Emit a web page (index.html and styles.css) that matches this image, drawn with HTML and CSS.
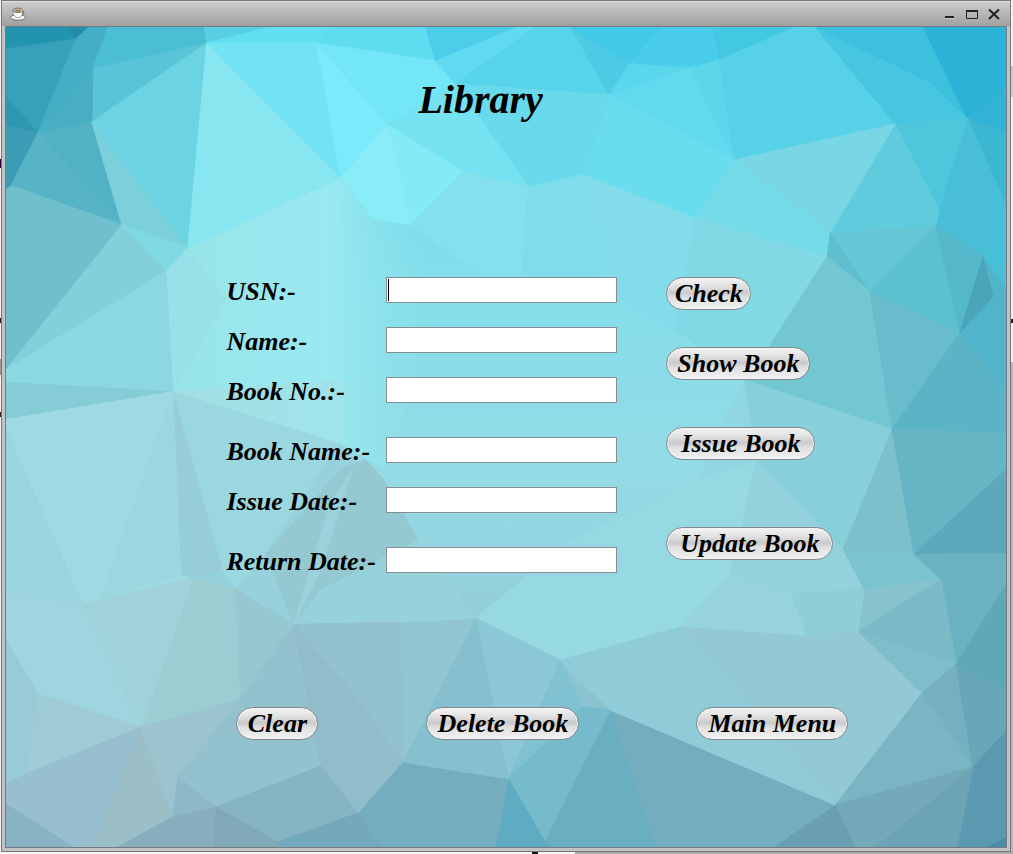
FILE: index.html
```html
<!DOCTYPE html>
<html lang="en">
<head>
<meta charset="utf-8">
<meta name="viewport" content="width=device-width, initial-scale=1">
<title>Library</title>
<link rel="stylesheet" href="styles.css">
</head>
<body>
<div class="window">
  <header class="titlebar">
    <svg class="cup" viewBox="0 0 16 14" aria-hidden="true">
      <ellipse cx="8" cy="10.4" rx="7.4" ry="2.8" fill="#f6f6f4" stroke="#666" stroke-width=".9"/>
      <path d="M11.500 4.500c3-.6 3.200 3-.6 3.500" fill="none" stroke="#777" stroke-width="1.300"/>
      <path d="M3 3.500c0 4 1.500 7 5 7s4.600-3 4.600-7z" fill="#fff" stroke="#777" stroke-width=".7"/>
      <ellipse cx="7.800" cy="3.400" rx="4.800" ry="2.200" fill="#f4efe6" stroke="#555" stroke-width=".8"/>
      <ellipse cx="7.800" cy="3.600" rx="3.700" ry="1.400" fill="#a9794a"/>
    </svg>
    <div class="controls">
      <button class="control" type="button" aria-label="Minimize"><svg viewBox="0 0 14 14"><path d="M2 11h9" stroke="#eee" stroke-width="1"/><path d="M2 10h9" stroke="#222" stroke-width="2"/></svg></button>
      <button class="control" type="button" aria-label="Maximize"><svg viewBox="0 0 14 14"><path d="M1.500 3.500h11v8h-11z" fill="none" stroke="#222" stroke-width="1"/><path d="M1 4h12" stroke="#222" stroke-width="2"/></svg></button>
      <button class="control" type="button" aria-label="Close"><svg viewBox="0 0 14 14"><path d="M2 2.500l10 9.500M12 2.500l-10 9.500" fill="none" stroke="#222" stroke-width="2"/></svg></button>
    </div>
  </header>
  <main class="panel">
    <svg class="facets" viewBox="5 27 1001 821" preserveAspectRatio="none" aria-hidden="true">
      <defs>
        <linearGradient id="sky" x1="0" y1="0" x2="0" y2="1">
          <stop offset="0" stop-color="#56d3ea"/><stop offset=".3" stop-color="#82deeb"/>
          <stop offset=".55" stop-color="#94dbe5"/><stop offset=".75" stop-color="#92cbd7"/><stop offset="1" stop-color="#78b0c0"/>
        </linearGradient>
        <linearGradient id="pale" x1="0" y1="0" x2="1" y2="0">
          <stop offset="0" stop-color="#99e4eb"/><stop offset=".55" stop-color="#9ae9f0"/><stop offset=".9" stop-color="#8ce3ec" stop-opacity="0"/>
        </linearGradient>
        <linearGradient id="wedge" x1="0" y1="0" x2="1" y2="0">
          <stop offset="0" stop-color="#a2dfe4"/><stop offset="1" stop-color="#9fe4ea"/>
        </linearGradient>
      </defs>
      <rect x="5" y="27" width="1001" height="821" fill="url(#sky)"/>
      <path d="M187 248L340 178L372 218L410 225L465 265L430 330L385 470L340 444L173 392L166 271z" fill="url(#pale)"/>
      <g class="mesh">
        <path color="#2394b0" d="M5 27H68L75 39L5 49z"/>
        <path color="#258ba8" d="M68 27H88L75 39z"/>
        <path color="#38a1b9" d="M5 49L75 39L37 133L5 97z"/>
        <path color="#3097b1" d="M5 97L37 133L5 126z"/>
        <path color="#3e9db6" d="M5 126L37 133L10 186L5 190z"/>
        <path color="#43aec4" d="M75 39L88 27H107L92 69L37 133z"/>
        <path color="#4bbed5" d="M107 27H203L206 43L92 69z"/>
        <path color="#59c3d7" d="M92 69L206 43L91 122z"/>
        <path color="#48afc3" d="M92 69L91 122L37 133z"/>
        <path color="#52b2c5" d="M37 133L91 122L121 225z"/>
        <path color="#57b4c7" d="M37 133L121 225L10 186z"/>
        <path color="#7bd0db" d="M91 122L187 248L121 225z"/>
        <path color="#6bd3e2" d="M91 122L206 43L187 248z"/>
        <path color="#88e6f0" d="M206 43L340 178L187 248z"/>
        <path color="#6fbfcd" d="M10 186L121 225L5 370V190z"/>
        <path color="#83d0da" d="M121 225L166 271L5 370z"/>
        <path color="#7fd9e3" d="M121 225L187 248L166 271z"/>
        <path color="#8cd8e0" d="M166 271L173 392L5 383V370z"/>
        <path color="#85ccd6" d="M5 383L173 392L5 420z"/>
        <path color="#9fdae2" d="M5 420L173 392L193 578L82 605L5 430z"/>
        <path color="#99d5dd" d="M5 430L82 605L5 592z"/>
        <path color="#9bd7df" d="M160 425L173 392L181 575L100 600z"/>
        <path color="#97cdd6" d="M173 392L222 570L193 578L181 575z"/>
        <path color="#9bd7de" d="M173 392L340 444L265 555L235 590L222 570z"/>
        <path class="wedge" d="M173 392L345 380L340 444z"/>
        <path color="#98e1e9" d="M166 271L187 248L225 300L173 392z"/>

        <path color="#58cfe2" d="M203 27H270L206 43z"/>
        <path color="#62e0f2" d="M206 43L270 27H330L316 43z"/>
        <path color="#72e3f2" d="M206 43L316 43L340 178z"/>
        <path color="#7beafa" d="M316 43L387 125L340 178z"/>
        <path color="#60dcf1" d="M316 43L330 27H425L435 61z"/>
        <path color="#73e6f7" d="M316 43L435 61L455 84L387 125z"/>
        <path color="#4ccde9" d="M425 27H517L435 61z"/>
        <path color="#5fdaf0" d="M517 27H535L455 84L435 61z"/>
        <path color="#57d3ea" d="M535 27H570L609 95L455 84z"/>
        <path color="#4fcae5" d="M570 27L629 64L609 95z"/>
        <path color="#43c9e8" d="M570 27H662L629 64z"/>
        <path color="#4acdea" d="M662 27H713L719 60L690 68L629 64z"/>
        <path color="#5ad6ed" d="M629 64L690 68L609 95z"/>
        <path color="#60daef" d="M690 68L734 160L609 95z"/>
        <path color="#5cd6ea" d="M690 68L719 60L734 160z"/>
        <path color="#43c8e3" d="M713 27H795L719 60z"/>
        <path color="#56d1e7" d="M719 60L795 27H815L895 124L734 160z"/>
        <path color="#46c6e1" d="M815 27L930 82L967 118L895 124z"/>
        <path color="#3cc0de" d="M815 27H923L967 118L930 82z"/>
        <path color="#2cb2d7" d="M923 27H1006V87L967 118z"/>
        <path color="#30b3d5" d="M967 118L1006 87V133z"/>
        <path color="#3bb7d2" d="M967 118L1006 133V205z"/>
        <path color="#48bfd6" d="M967 118L1006 205V290L983 257L936 226L939 210z"/>
        <path color="#4ec7dd" d="M895 124L967 118L939 210z"/>
        <path color="#5fcbdd" d="M895 124L939 210L936 226L830 233z"/>
        <path color="#78d6e5" d="M734 160L895 124L830 233z"/>
        <path color="#74dbe8" d="M734 160L830 233L827 257L695 218z"/>
        <path color="#69dcee" d="M609 95L734 160L695 218L582 175z"/>
        <path color="#68daec" d="M455 84L609 95L582 175L528 187z"/>
        <path color="#74e2f1" d="M455 84L528 187L463 172L387 125z"/>
        <path color="#83eaf6" d="M387 125L463 172L410 225z"/>
        <path color="#8aecf7" d="M387 125L410 225L372 218L340 178z"/>
        <path color="#84e0ec" d="M463 172L528 187L520 290L465 265L410 225z"/>
        <path color="#7fdceb" d="M528 187L582 175L610 300L520 290z"/>
        <path color="#82dcea" d="M582 175L695 218L675 330L610 300z"/>
        <path color="#82d9e5" d="M695 218L827 257L765 350L743 380L675 330z"/>
        <path color="#65c6d6" d="M830 233L936 226L870 292z"/>
        <path color="#5fbfcf" d="M830 233L870 292L827 257z"/>
        <path color="#72c7d3" d="M827 257L870 292L892 430L743 380L770 345z"/>
        <path color="#5bc0d1" d="M870 292L936 226L960 333z"/>
        <path color="#68bccb" d="M870 292L960 333L892 430z"/>
        <path color="#55b8ca" d="M936 226L983 257L960 333z"/>
        <path color="#50b5ca" d="M983 257L1006 290V392L960 333z"/>
        <path color="#4ba5b9" d="M983 257L993 297L960 333z"/>
        <path color="#5bb3c6" d="M960 333L1006 392V434L892 430z"/>
        <path color="#87d0da" d="M743 380L892 430L843 550L756 462z"/>
        <path color="#7dc0cc" d="M892 430L914 555L843 550z"/>
        <path color="#66b5c5" d="M892 430L1006 434V470L914 555z"/>
        <path color="#5ba9bb" d="M1006 470V554L914 555z"/>
        <path color="#90d7e1" d="M743 380L756 462L698 480z"/>
        <path color="#97d9e2" d="M698 480L756 462L730 577L680 628L560 661L475 619L566 543z"/>
        <path color="#93d2dc" d="M756 462L843 550L864 590L792 595L730 577z"/>
        <path color="#7ac3cf" d="M843 550L914 555L941 580L864 590z"/>
        <path color="#6ab2c1" d="M914 555L1006 554V585L956 665L941 580z"/>
        <path color="#5fa8b8" d="M1006 585V693L956 665z"/>
        <path color="#86c3cd" d="M864 590L941 580L858 632z"/>
        <path color="#7bbac7" d="M941 580L956 665L858 632z"/>
        <path color="#97d3dd" d="M730 577L792 595L807 637L680 628z"/>
        <path color="#8fcdd7" d="M792 595L864 590L858 632L807 637z"/>
        <path color="#93c9d5" d="M680 628L807 637L858 632L922 694L835 806z"/>
        <path color="#80bdca" d="M858 632L956 665L922 694z"/>
        <path color="#75b0c0" d="M922 694L956 665L973 768z"/>
        <path color="#7ab5c4" d="M922 694L973 768L835 806z"/>
        <path color="#68a7ba" d="M956 665L1006 693V732L973 768z"/>
        <path color="#5a99b0" d="M973 768L1006 732V848H957z"/>
        <path color="#4c8aa8" d="M988 848L1006 839V848z"/>
        <path color="#74a9ba" d="M835 806L973 768L876 848H855z"/>
        <path color="#6ca4b6" d="M973 768L957 848H876z"/>
        <path color="#6a9fb2" d="M835 806L855 848H773z"/>
        <path color="#74adbd" d="M610 711L835 806L773 848H655z"/>
        <path color="#6aafc1" d="M610 711L655 848H550L544 842z"/>
        <path color="#8fccd8" d="M680 628L835 806L610 711L560 661z"/>
        <path color="#8bc7d4" d="M475 619L560 661L508 780z"/>
        <path color="#80c2d1" d="M560 661L582 708L508 780z"/>
        <path color="#75bbcb" d="M582 708L610 711L544 842L508 780z"/>
        <path color="#5fabc2" d="M508 780L544 842L550 848H495z"/>
        <path color="#74adbe" d="M402 763L508 780L495 848H380L357 814z"/>
        <path color="#86c0ce" d="M475 619L508 780L402 763z"/>
        <path color="#90c5d1" d="M401 623L475 619L402 763z"/>

        <path color="#97d2dc" d="M235 590L265 555L340 444L417 540L475 619L401 623L293 625z"/>
        <path color="#95c9d2" d="M265 555L340 470L365 460L383 480L417 540L320 590L293 625z"/>
        <path color="#9ad3dc" d="M330 503L352 470L318 575L293 625z"/>
        <path color="#9ccdd3" d="M193 578L235 590L240 700L140 728z"/>
        <path color="#a0d3d9" d="M82 605L193 578L140 728z"/>
        <path color="#9fd5df" d="M5 592L82 605L140 728L37 695L5 640z"/>
        <path color="#99cad7" d="M5 640L37 695L25 775L5 785z"/>
        <path color="#9fccd4" d="M37 695L140 728L25 775z"/>
        <path color="#97bfcf" d="M5 785L25 775L140 728L92 848H72L5 805z"/>
        <path color="#9cbec6" d="M140 728L172 818L117 848H92z"/>
        <path color="#89b2c2" d="M5 805L72 848H5z"/>
        <path color="#9cc4cf" d="M140 728L240 700L177 778L172 818z"/>
        <path color="#96c8d1" d="M235 590L293 625L240 700z"/>
        <path color="#94c1ce" d="M293 625L401 623L402 763L320 767L215 808L177 778L240 700z"/>
        <path color="#91bdcb" d="M293 625L357 700L402 763L357 814L320 767z"/>
        <path color="#8db8c7" d="M177 778L215 808L172 818z"/>
        <path color="#87b4c2" d="M215 808L320 767L357 814L277 843z"/>
        <path color="#74a9bc" d="M277 843L357 814L380 848H277z"/>
        <path color="#81a8b6" d="M215 808L277 843V848H212z"/>
        <path color="#88aebd" d="M172 818L215 808L212 848H117z"/>
      </g>
    </svg>

    <form class="form">
      <h1 class="heading">Library</h1>
      <div class="fields">
        <div class="row"><label for="usn">USN:-</label><span class="entry active"><input id="usn" type="text"></span></div>
        <div class="row"><label for="name">Name:-</label><span class="entry"><input id="name" type="text"></span></div>
        <div class="row spaced"><label for="number">Book No.:-</label><span class="entry"><input id="number" type="text"></span></div>
        <div class="row"><label for="book">Book Name:-</label><span class="entry"><input id="book" type="text"></span></div>
        <div class="row spaced"><label for="issued">Issue Date:-</label><span class="entry"><input id="issued" type="text"></span></div>
        <div class="row"><label for="returned">Return Date:-</label><span class="entry"><input id="returned" type="text"></span></div>
      </div>
      <div class="actions">
        <button type="button" class="pill check">Check</button>
        <button type="button" class="pill show">Show Book</button>
        <button type="button" class="pill issue">Issue Book</button>
        <button type="button" class="pill update">Update Book</button>
      </div>
      <div class="footer">
        <button type="button" class="pill clear">Clear</button>
        <button type="button" class="pill delete">Delete Book</button>
        <button type="button" class="pill menu">Main Menu</button>
      </div>
    </form>
  </main>
</div>
</body>
</html>
```

FILE: styles.css
```css
* { box-sizing: border-box; }

body {
  margin: 0;
  min-height: 100vh;
  padding: 0 2px 2px 1px;
  display: flex;
  background:
    linear-gradient(#111, #111) 532px 100% / 6px 2px no-repeat,
    linear-gradient(#aaa, #aaa) 575px 100% / 100% 2px no-repeat,
    linear-gradient(#222, #222) 100% 319px / 2px 4px no-repeat,
    linear-gradient(#c8c8c8, #c8c8c8) 100% 66px / 2px 31px no-repeat,
    linear-gradient(#b8b8bc, #b8b8bc) 100% 362px / 2px 100% no-repeat,
    linear-gradient(#203, #203) 0 159px / 1px 9px no-repeat,
    linear-gradient(#222, #222) 0 318px / 1px 5px no-repeat,
    linear-gradient(#999, #999) 0 359px / 1px 16px no-repeat,
    linear-gradient(#222, #222) 0 412px / 1px 5px no-repeat,
    #f4f4f4;
  font-family: "Liberation Serif", serif;
  color: #000;
}

.window {
  flex: 1;
  display: flex;
  flex-direction: column;
  border: 1px solid #77757a;
  background: #c3c3c6;
}

.titlebar {
  height: 25px;
  padding: 0 9px 0 8px;
  display: flex;
  align-items: center;
  justify-content: space-between;
  border-top: 1px solid #e2e2e2;
  background: linear-gradient(#cbcbcb, #a0a0a0);
}

.cup { width: 16px; height: 14px; }

.controls { display: flex; gap: 8px; }

.control {
  width: 14px;
  height: 14px;
  padding: 0;
  border: 0;
  background: none;
}

.control svg { display: block; width: 14px; height: 14px; }

.panel {
  flex: 1;
  display: grid;
  margin: 0 3px 3px;
  border: 1px solid #747b85;
}

.facets, .form { grid-area: 1 / 1; }

.facets {
  width: 100%;
  height: 100%;
  min-height: 0;
  contain: size;
}

.mesh path { fill: currentColor; stroke: currentColor; stroke-width: 1; }
.mesh .wedge { fill: url(#wedge); stroke: none; }

.form {
  z-index: 1;
  display: grid;
  grid-template-columns: 221fr 391px 49px 182px 158fr;
  grid-template-rows: 250px 430px auto;
  font-size: 26px;
  font-weight: bold;
  font-style: italic;
  line-height: 30px;
}

.heading {
  grid-area: 1 / 2;
  margin: 0;
  padding: 50px 0 0 192px;
  font-size: 40px;
  line-height: 46px;
}

.fields { grid-area: 2 / 2; }

.row {
  display: grid;
  grid-template-columns: 160px 1fr;
  height: 50px;
}

.row.spaced { height: 60px; }

.entry { position: relative; height: 26px; }

.entry input {
  display: block;
  width: 100%;
  height: 26px;
  padding: 0 4px;
  border: 1px solid #848e93;
  border-radius: 0;
  background: #fff;
  font: 16px "Liberation Sans", sans-serif;
}

.entry.active::after {
  content: "";
  position: absolute;
  left: 2px;
  top: 2px;
  width: 1px;
  height: 22px;
  background: #000;
}

.actions {
  grid-area: 2 / 4;
  display: flex;
  flex-direction: column;
  align-items: flex-start;
}

.pill {
  height: 33px;
  padding: 0;
  border: 1px solid #85898d;
  border-radius: 17px;
  background: linear-gradient(#f4f4f4 0%, #dedede 30%, #c9c9cb 48%, #dfdfdf 62%, #f2f2f2 100%);
  box-shadow: inset 0 0 0 1px #f3f3f3;
  color: #000;
  font: inherit;
  text-align: center;
  white-space: nowrap;
}

.check { width: 85px; margin-bottom: 37px; }
.show { width: 144px; margin-bottom: 47px; }
.issue { width: 149px; margin-bottom: 67px; }
.update { width: 167px; }

.footer {
  grid-area: 3 / 2 / 4 / 5;
  padding-left: 10px;
  display: grid;
  grid-template-columns: 190px 270px auto;
  align-items: start;
  justify-content: start;
}

.clear { width: 82px; }
.delete { width: 153px; }
.menu { width: 152px; }
```
